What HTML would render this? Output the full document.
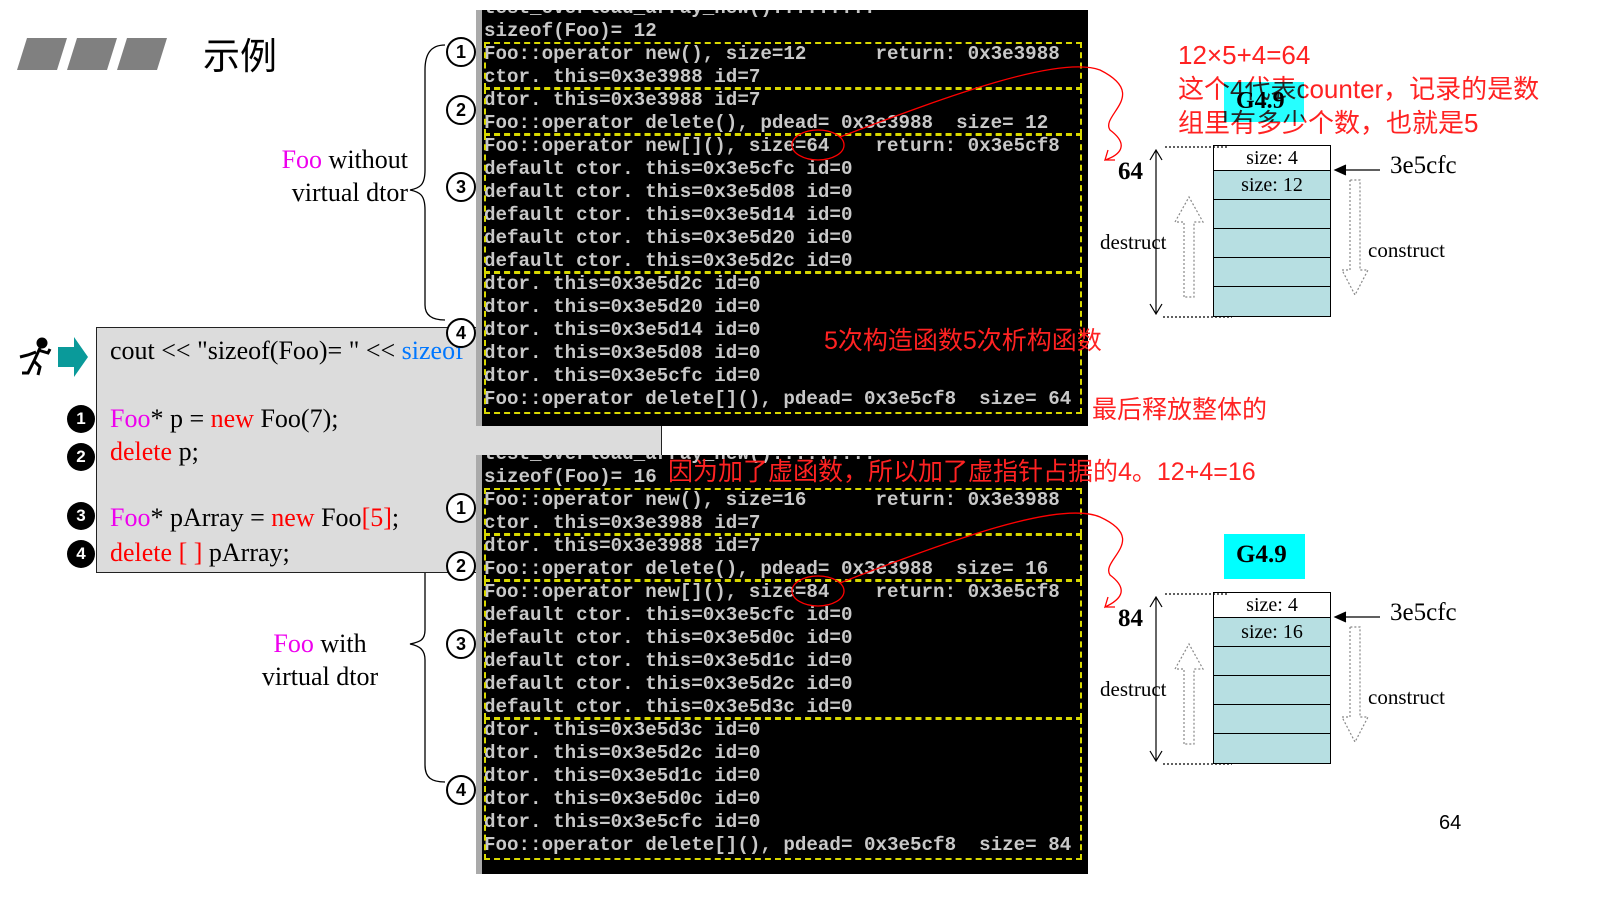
<!DOCTYPE html>
<html><head><meta charset="utf-8"><style>
*{margin:0;padding:0;box-sizing:border-box}
body{width:1600px;height:899px;background:#fff;position:relative;overflow:hidden;font-family:"Liberation Serif","Noto Serif CJK SC",serif}
.a{position:absolute}
.con{position:absolute;left:476px;width:612px;background:#000;border-left:6px solid #aaa;overflow:hidden}
.con pre{position:absolute;left:2px;font-family:"Liberation Mono",monospace;font-weight:bold;font-size:19.2px;line-height:23px;color:#c8c8c8;white-space:pre}
.dz{position:absolute;left:2px;width:598px;border:2px dashed #d8d800}
.mag{color:#e0e}.red{color:#f00}.blu{color:#07f}
.num{position:absolute;width:28px;height:28px;border-radius:50%;background:#000;color:#fff;font:bold 17px "Liberation Sans",sans-serif;text-align:center;line-height:28px}
.cir{position:absolute;width:30px;height:30px;border-radius:50%;border:2px solid #000;background:#fff;font:bold 18px "Liberation Sans",sans-serif;text-align:center;line-height:26px}
.cn{font-family:"Liberation Sans","Noto Sans CJK SC",sans-serif;color:#f22}
.cell{position:absolute;left:1213px;width:118px;border:1.5px solid #000;background:#b7dfe2;font-size:20px;text-align:center}
</style></head><body>
<svg class="a" style="left:15px;top:38px" width="155" height="34"><g fill="#808080"><polygon points="12,0 52,0 42,32 2,32"/><polygon points="62,0 102,0 92,32 52,32"/><polygon points="112,0 152,0 142,32 102,32"/></g></svg>
<div class="a" style="left:203px;top:26px;font:37px 'Noto Sans CJK SC',sans-serif">示例</div>

<div class="a" style="left:250px;top:143px;width:158px;text-align:right;font-size:26px;line-height:33px"><span class="mag">Foo</span> without<br>virtual dtor</div>
<div class="a" style="left:240px;top:627px;width:160px;text-align:center;font-size:26px;line-height:33px"><span class="mag">Foo</span> with<br>virtual dtor</div>

<svg class="a" style="left:400px;top:40px" width="50" height="760" fill="none" stroke="#000" stroke-width="1.3">
<path d="M45,5 C30,5 25,15 25,30 L25,130 C25,145 20,148 10,150 C20,152 25,155 25,170 L25,265 C25,275 32,280 45,280"/>
<path d="M45,473 C30,475 25,485 25,495 L25,590 C25,600 20,602 10,604 C20,606 25,610 25,620 L25,725 C25,738 32,742 45,742"/>
</svg>

<div class="a" style="left:96px;top:327px;width:566px;height:246px;background:#dcdcdc;border:1.5px solid #222"></div>
<div class="a" style="left:110px;top:336px;font-size:26px;line-height:30px">cout &lt;&lt; "sizeof(Foo)= " &lt;&lt; <span class="blu">sizeof</span></div>
<div class="a" style="left:110px;top:402px;font-size:26px;line-height:33px"><span class="mag">Foo</span>* p = <span class="red">new</span> Foo(7);<br><span class="red">delete</span> p;</div>
<div class="a" style="left:110px;top:500px;font-size:26px;line-height:35px"><span class="mag">Foo</span>* pArray = <span class="red">new</span> Foo<span class="red">[5]</span>;<br><span class="red">delete [ ]</span> pArray;</div>
<div class="num" style="left:67px;top:405px">1</div>
<div class="num" style="left:67px;top:443px">2</div>
<div class="num" style="left:67px;top:502px">3</div>
<div class="num" style="left:67px;top:540px">4</div>
<svg class="a" style="left:18px;top:335px" width="75" height="44"><g stroke="#000" stroke-width="3" fill="none"><circle cx="24" cy="8" r="4" fill="#000"/><path d="M22,13 L16,26 L22,32 L20,40 M16,26 L10,38 L4,38 M20,15 L30,18 L32,14 M18,17 L10,20 L2,22"/></g><polygon points="40,12 56,12 56,2 70,22 56,42 56,32 40,32" fill="#0a9a9a"/></svg>

<div class="con" style="top:10px;height:416px">
<pre style="top:-13px">test_overload_array_new().........
sizeof(Foo)= 12
Foo::operator new(), size=12      return: 0x3e3988
ctor. this=0x3e3988 id=7
dtor. this=0x3e3988 id=7
Foo::operator delete(), pdead= 0x3e3988  size= 12
Foo::operator new[](), size=64    return: 0x3e5cf8
default ctor. this=0x3e5cfc id=0
default ctor. this=0x3e5d08 id=0
default ctor. this=0x3e5d14 id=0
default ctor. this=0x3e5d20 id=0
default ctor. this=0x3e5d2c id=0
dtor. this=0x3e5d2c id=0
dtor. this=0x3e5d20 id=0
dtor. this=0x3e5d14 id=0
dtor. this=0x3e5d08 id=0
dtor. this=0x3e5cfc id=0
Foo::operator delete[](), pdead= 0x3e5cf8  size= 64</pre>
<div class="dz" style="top:32px;height:47px"></div>
<div class="dz" style="top:78px;height:47px"></div>
<div class="dz" style="top:124px;height:139px"></div>
<div class="dz" style="top:262px;height:142px"></div>
</div>
<div class="con" style="top:455px;height:419px">
<pre style="top:-12px">test_overload_array_new().........
sizeof(Foo)= 16
Foo::operator new(), size=16      return: 0x3e3988
ctor. this=0x3e3988 id=7
dtor. this=0x3e3988 id=7
Foo::operator delete(), pdead= 0x3e3988  size= 16
Foo::operator new[](), size=84    return: 0x3e5cf8
default ctor. this=0x3e5cfc id=0
default ctor. this=0x3e5d0c id=0
default ctor. this=0x3e5d1c id=0
default ctor. this=0x3e5d2c id=0
default ctor. this=0x3e5d3c id=0
dtor. this=0x3e5d3c id=0
dtor. this=0x3e5d2c id=0
dtor. this=0x3e5d1c id=0
dtor. this=0x3e5d0c id=0
dtor. this=0x3e5cfc id=0
Foo::operator delete[](), pdead= 0x3e5cf8  size= 84</pre>
<div class="dz" style="top:33px;height:47px"></div>
<div class="dz" style="top:79px;height:47px"></div>
<div class="dz" style="top:125px;height:139px"></div>
<div class="dz" style="top:263px;height:142px"></div>
</div>

<div class="cir" style="left:446px;top:37px">1</div>
<div class="cir" style="left:446px;top:95px">2</div>
<div class="cir" style="left:446px;top:172px">3</div>
<div class="cir" style="left:446px;top:318px">4</div>
<div class="cir" style="left:446px;top:493px">1</div>
<div class="cir" style="left:446px;top:551px">2</div>
<div class="cir" style="left:446px;top:629px">3</div>
<div class="cir" style="left:446px;top:775px">4</div>

<div class="a cn" style="left:1178px;top:38px;font-size:26px;line-height:34px">12×5+4=64<br>这个4代表counter，记录的是数<br>组里有多少个数，也就是5</div>
<div class="a" style="left:1224px;top:82px;width:80px;height:40px;background:#0ff;opacity:.85;mix-blend-mode:multiply"></div>
<div class="a" style="left:1236px;top:88px;font-weight:bold;font-size:24px">G4.9</div>
<div class="a cn" style="left:824px;top:321px;font-size:25px">5次构造函数5次析构函数</div>
<div class="a cn" style="left:1092px;top:390px;font-size:25px">最后释放整体的</div>
<div class="a cn" style="left:668px;top:452px;font-size:25px">因为加了虚函数，所以加了虚指针占据的4。12+4=16</div>
<div class="a" style="left:1224px;top:534px;width:81px;height:45px;background:#0ff"></div>
<div class="a" style="left:1236px;top:541px;font-weight:bold;font-size:25px">G4.9</div>

<svg class="a" style="left:0;top:0" width="1600" height="899" fill="none" stroke="#f00" stroke-width="1.3">
<ellipse cx="818" cy="145" rx="26" ry="15"/>
<path d="M840,137 C950,95 1060,55 1100,70 C1150,95 1100,115 1110,130 C1130,145 1120,155 1105,160 L1108,150 M1105,160 L1115,160"/>
<ellipse cx="818" cy="591" rx="26" ry="15"/>
<path d="M840,583 C950,540 1060,500 1100,517 C1150,540 1100,560 1110,575 C1130,590 1120,600 1105,607 L1108,597 M1105,607 L1115,607"/>
</svg>

<div class="a" style="left:1118px;top:158px;font-weight:bold;font-size:25px">64</div>
<div class="a" style="left:1118px;top:605px;font-weight:bold;font-size:25px">84</div>
<div class="a" style="left:1100px;top:230px;font-size:21px">destruct</div>
<div class="a" style="left:1100px;top:677px;font-size:21px">destruct</div>
<div class="a" style="left:1368px;top:238px;font-size:21px">construct</div>
<div class="a" style="left:1368px;top:685px;font-size:21px">construct</div>
<div class="a" style="left:1390px;top:152px;font-size:25px">3e5cfc</div>
<div class="a" style="left:1390px;top:599px;font-size:25px">3e5cfc</div>

<div class="cell" style="top:145px;height:26px;background:#fff;line-height:24px">size: 4</div>
<div class="cell" style="top:170px;height:30px;line-height:28px">size: 12</div>
<div class="cell" style="top:199px;height:30px"></div>
<div class="cell" style="top:228px;height:30px"></div>
<div class="cell" style="top:257px;height:30px"></div>
<div class="cell" style="top:286px;height:31px"></div>
<div class="cell" style="top:592px;height:26px;background:#fff;line-height:24px">size: 4</div>
<div class="cell" style="top:617px;height:30px;line-height:28px">size: 16</div>
<div class="cell" style="top:646px;height:30px"></div>
<div class="cell" style="top:675px;height:30px"></div>
<div class="cell" style="top:704px;height:30px"></div>
<div class="cell" style="top:733px;height:31px"></div>

<svg class="a" style="left:0;top:0" width="1600" height="899" fill="none" stroke="#000" stroke-width="1.2">
<path d="M1165,147 L1228,147 M1163,317 L1232,317" stroke-dasharray="2,2"/>
<path d="M1156,150 L1156,314 M1150,160 L1156,150 L1162,160 M1150,304 L1156,314 L1162,304"/>
<path d="M1184,297 L1184,222 L1175,222 L1189,197 L1203,222 L1194,222 L1194,297 Z M1350,180 L1350,270 L1342,270 L1355,295 L1368,270 L1360,270 L1360,180 Z" stroke="#888" stroke-dasharray="2,2"/>
<path d="M1380,170 L1335,170 M1346,165 L1335,170 L1346,175" fill="#000"/>
<path d="M1165,594 L1228,594 M1163,764 L1232,764" stroke-dasharray="2,2"/>
<path d="M1156,597 L1156,761 M1150,607 L1156,597 L1162,607 M1150,751 L1156,761 L1162,751"/>
<path d="M1184,744 L1184,669 L1175,669 L1189,644 L1203,669 L1194,669 L1194,744 Z M1350,627 L1350,717 L1342,717 L1355,742 L1368,717 L1360,717 L1360,627 Z" stroke="#888" stroke-dasharray="2,2"/>
<path d="M1380,617 L1335,617 M1346,612 L1335,617 L1346,622" fill="#000"/>
</svg>

<div class="a" style="left:1439px;top:812px;font:20px 'Liberation Sans',sans-serif">64</div>
</body></html>
